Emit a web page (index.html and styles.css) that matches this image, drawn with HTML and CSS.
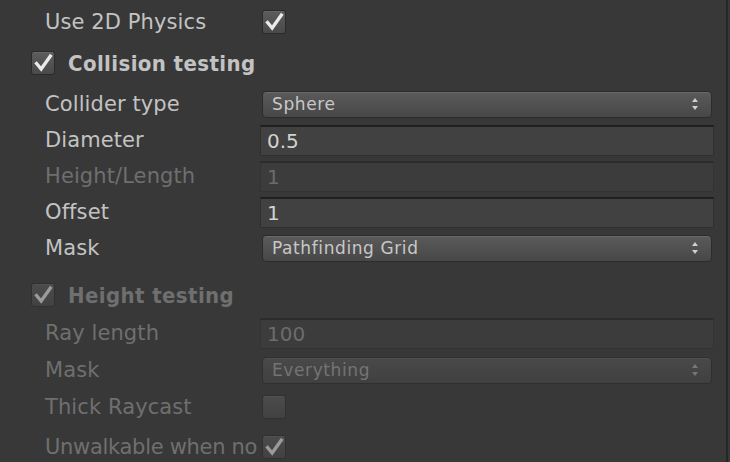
FILE: index.html
```html
<!DOCTYPE html>
<html>
<head>
<meta charset="utf-8">
<link rel="stylesheet" href="styles.css">
</head>
<body>
<div class="panel">
  <div class="row r36">
    <div class="label">Use 2D Physics</div>
    <div class="control"><span class="check on"><svg viewBox="0 0 24 24"><path d="M5 12.5 L10 18.5 L20 4.5"/></svg></span></div>
  </div>
  <div class="row head h46">
    <span class="check on"><svg viewBox="0 0 24 24"><path d="M5 12.5 L10 18.5 L20 4.5"/></svg></span>
    <span class="head-text">Collision testing</span>
  </div>
  <div class="row r36">
    <div class="label">Collider type</div>
    <div class="control"><div class="dropdown"><span>Sphere</span><span class="arrows"></span></div></div>
  </div>
  <div class="row r36">
    <div class="label">Diameter</div>
    <div class="control"><div class="field">0.5</div></div>
  </div>
  <div class="row r36 disabled">
    <div class="label">Height/Length</div>
    <div class="control"><div class="field">1</div></div>
  </div>
  <div class="row r36">
    <div class="label">Offset</div>
    <div class="control"><div class="field">1</div></div>
  </div>
  <div class="row r36">
    <div class="label">Mask</div>
    <div class="control"><div class="dropdown"><span>Pathfinding Grid</span><span class="arrows"></span></div></div>
  </div>
  <div class="row head h38 gap-top disabled">
    <span class="check on"><svg viewBox="0 0 24 24"><path d="M5 12.5 L10 18.5 L20 4.5"/></svg></span>
    <span class="head-text">Height testing</span>
  </div>
  <div class="row h38 disabled">
    <div class="label">Ray length</div>
    <div class="control"><div class="field">100</div></div>
  </div>
  <div class="row r36 disabled">
    <div class="label">Mask</div>
    <div class="control"><div class="dropdown"><span>Everything</span><span class="arrows"></span></div></div>
  </div>
  <div class="row h38 disabled">
    <div class="label">Thick Raycast</div>
    <div class="control"><span class="check"></span></div>
  </div>
  <div class="row h42 disabled">
    <div class="label tight">Unwalkable when no</div>
    <div class="control"><span class="check on"><svg viewBox="0 0 24 24"><path d="M5 12.5 L10 18.5 L20 4.5"/></svg></span></div>
  </div>
</div>
</body>
</html>
```
FILE: styles.css
```css
html, body {
  margin: 0;
  padding: 0;
  background: #383838;
  height: 100%;
  overflow: hidden;
}
.panel {
  width: 726px;
  height: 462px;
  border-right: 2px solid #262626;
  box-sizing: content-box;
  padding-top: 4px;
  font-family: "DejaVu Sans", "Liberation Sans", sans-serif;
  color: #c3c3c3;
  display: flex;
  flex-direction: column;
}
.row {
  display: flex;
  align-items: center;
  flex: none;
}
.r36 { height: 36px; }
.h38 { height: 38px; }
.h42 { height: 42px; }
.h46 { height: 46px; }
.gap-top { margin-top: 10px; }
.label {
  width: 217px;
  padding-left: 45px;
  font-size: 21px;
  letter-spacing: 0.1px;
  white-space: nowrap;
  overflow: hidden;
  flex: none;
  line-height: 26px;
}
.label.tight {
  letter-spacing: -0.3px;
}
.control {
  flex: 1;
  display: flex;
  align-items: center;
  padding-right: 12px;
  margin-left: -2px;
}
.head {
  padding-left: 29px;
}
.head-text {
  font-family: "DejaVu Sans Condensed", "DejaVu Sans", sans-serif;
  font-stretch: condensed;
  font-weight: bold;
  font-size: 22px;
  margin-left: 13px;
  letter-spacing: 0.4px;
}
.check {
  width: 22px;
  height: 22px;
  border: 1px solid #2a2a2a;
  border-radius: 3px;
  background: linear-gradient(#5c5c5c, #4a4a4a);
  box-shadow: inset 0 1px 0 #676767;
  display: inline-flex;
  align-items: center;
  justify-content: center;
  margin-left: 2px;
  flex: none;
}
.check svg {
  width: 22px;
  height: 22px;
}
.check svg path {
  fill: none;
  stroke: #ebebeb;
  stroke-width: 3.6;
  stroke-linecap: square;
  stroke-linejoin: miter;
}
.field {
  flex: 1;
  height: 28px;
  background: #414141;
  border: 1px solid #303030;
  border-top: 2px solid #1f1f1f;
  font-size: 20px;
  line-height: 28px;
  padding-left: 6px;
  color: #d2d2d2;
}
.dropdown {
  flex: 1;
  margin: 0 2px;
  height: 25px;
  border: 1px solid #2b2b2b;
  border-radius: 4px;
  background: linear-gradient(#5a5a5a, #474747);
  box-shadow: inset 0 1px 0 #6a6a6a;
  display: flex;
  align-items: center;
  justify-content: space-between;
  padding: 0 12px 0 9px;
  font-size: 17px;
  letter-spacing: 0.6px;
  color: #c8c8c8;
}
.arrows {
  width: 7px;
  height: 12px;
  position: relative;
}
.arrows::before, .arrows::after {
  content: "";
  position: absolute;
  left: 0;
  border-left: 3.5px solid transparent;
  border-right: 3.5px solid transparent;
}
.arrows::before {
  top: 0;
  border-bottom: 4px solid #cfcfcf;
}
.arrows::after {
  bottom: 0;
  border-top: 4px solid #cfcfcf;
}
.disabled .label,
.disabled .head-text { color: #6f6f6f; }
.disabled .check { opacity: 0.55; }
.disabled .field {
  background: #3c3c3c;
  border-color: #333;
  border-top-color: #2c2c2c;
  color: #6c6c6c;
}
.disabled .dropdown {
  background: linear-gradient(#494949, #404040);
  box-shadow: inset 0 1px 0 #4f4f4f;
  border-color: #2f2f2f;
  color: #747474;
}
.disabled .arrows::before { border-bottom-color: #777; }
.disabled .arrows::after { border-top-color: #777; }
```
